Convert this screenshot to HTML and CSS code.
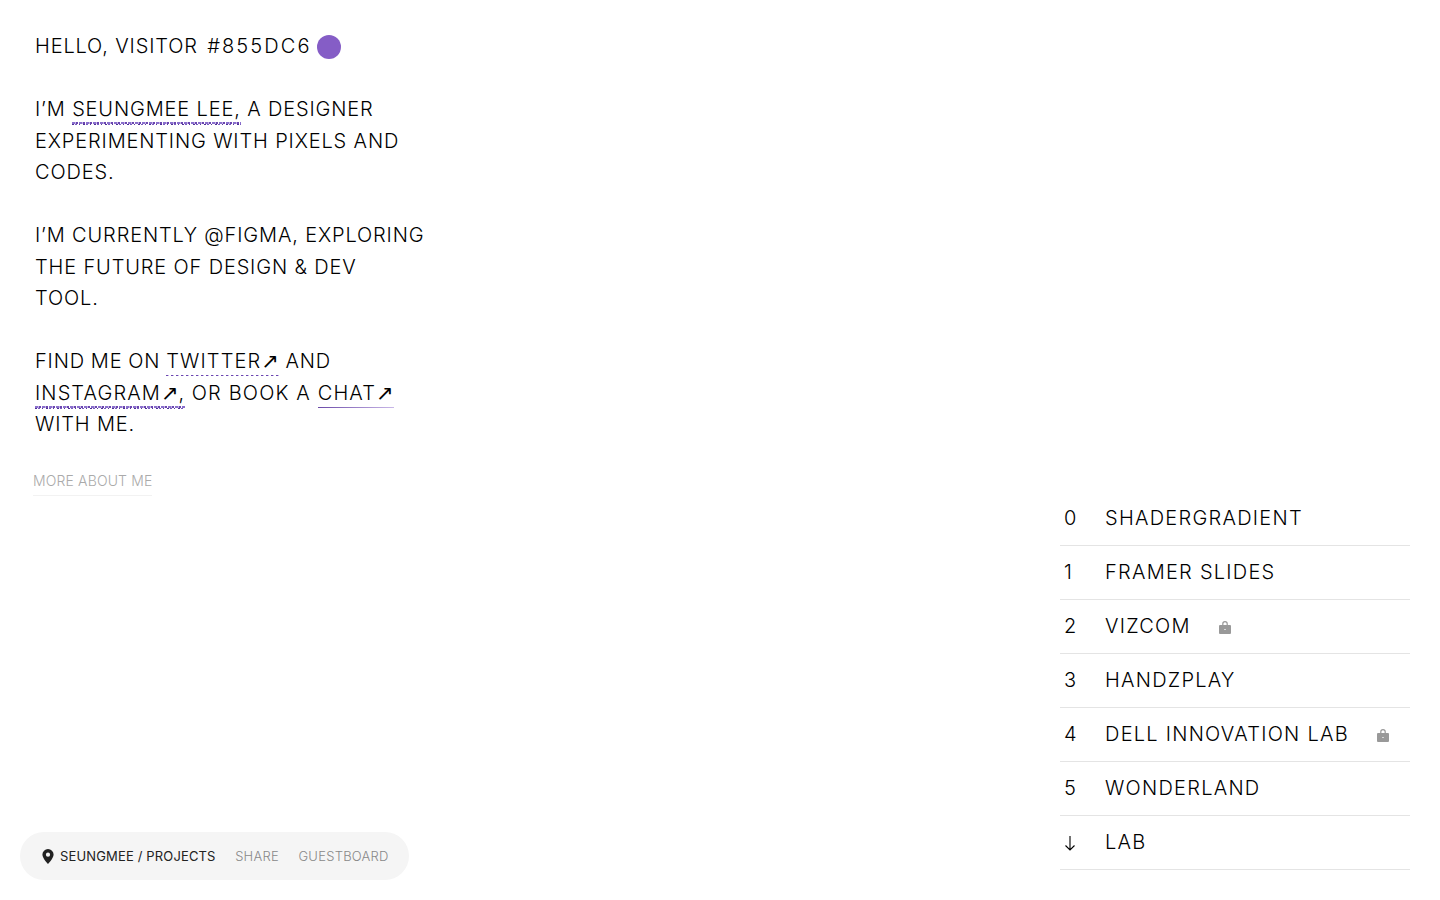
FILE: index.html
```html
<!DOCTYPE html>
<html lang="en">
<head>
<meta charset="utf-8">
<title>Seungmee Lee</title>
<link rel="stylesheet" href="styles.css">
</head>
<body>
<main class="page">
  <section class="intro">
    <p class="para">HELLO, VISITOR <span class="code">#855DC6</span> <span class="dot"></span></p>
    <p class="para">I’M <a class="link squiggle">SEUNGMEE LEE,</a> A DESIGNER EXPERIMENTING WITH PIXELS AND CODES.</p>
    <p class="para">I’M CURRENTLY @FIGMA, EXPLORING THE FUTURE OF DESIGN &amp; DEV TOOL.</p>
    <p class="para"><span class="tight">FIND ME ON </span><a class="link faint">TWITTER<span class="arrow">↗</span></a> AND <a class="link squiggle wide">INSTAGRAM<span class="arrow">↗</span>,</a> <span class="loose">OR BOOK A </span><a class="link soft">CHAT<span class="arrow">↗</span></a> WITH ME.</p>
    <a class="more">MORE ABOUT ME</a>
  </section>
  <ol class="projects">
    <li class="project"><span class="num">0</span><span class="name">SHADERGRADIENT</span></li>
    <li class="project"><span class="num">1</span><span class="name">FRAMER SLIDES</span></li>
    <li class="project"><span class="num">2</span><span class="name">VIZCOM</span><svg class="lock" viewBox="0 0 12 14"><path d="M3.200 6V3.800a2.800 2.800 0 0 1 5.600 0V6H7.600V3.800a1.600 1.600 0 0 0-3.200 0V6z"/><path fill-rule="evenodd" d="M1 5h10a1 1 0 0 1 1 1v7a1 1 0 0 1-1 1H1a1 1 0 0 1-1-1V6a1 1 0 0 1 1-1zm4.400 4v1h1.200V9z"/></svg></li>
    <li class="project"><span class="num">3</span><span class="name">HANDZPLAY</span></li>
    <li class="project"><span class="num">4</span><span class="name">DELL INNOVATION LAB</span><svg class="lock" viewBox="0 0 12 14"><path d="M3.200 6V3.800a2.800 2.800 0 0 1 5.600 0V6H7.600V3.800a1.600 1.600 0 0 0-3.200 0V6z"/><path fill-rule="evenodd" d="M1 5h10a1 1 0 0 1 1 1v7a1 1 0 0 1-1 1H1a1 1 0 0 1-1-1V6a1 1 0 0 1 1-1zm4.400 4v1h1.200V9z"/></svg></li>
    <li class="project"><span class="num">5</span><span class="name">WONDERLAND</span></li>
    <li class="project"><span class="num"><svg class="down" viewBox="0 0 12 16"><path d="M6 1v14M1.500 10.500 6 15l4.500-4.500"/></svg></span><span class="name">LAB</span></li>
  </ol>
</main>
<nav class="dock">
  <svg class="pin" viewBox="0 0 12 15"><path fill-rule="evenodd" d="M6 0a5.600 5.600 0 0 1 5.600 5.600C11.600 9.400 6 15 6 15S.4 9.400.4 5.600A5.600 5.600 0 0 1 6 0zm0 3.600a2.100 2.100 0 1 0 0 4.200 2.100 2.100 0 0 0 0-4.200z"/></svg>
  <span class="crumb">SEUNGMEE / PROJECTS</span>
  <a class="dock-link">SHARE</a>
  <a class="dock-link">GUESTBOARD</a>
</nav>
</body>
</html>
```

FILE: styles.css
```css
* { box-sizing: border-box; }
html, body { margin: 0; padding: 0; height: 100%; background: #fff; overflow: hidden; }
body { font-family: Inter, "Liberation Sans", sans-serif; color: #000; }

.page {
  height: 900px;
  display: flex;
  justify-content: space-between;
  align-items: flex-end;
  padding: 31px 30px 30px 35px;
}

.intro {
  align-self: flex-start;
  width: 390px;
  font-size: 20px;
  font-weight: 300;
  letter-spacing: .85px;
  line-height: 31.5px;
}
.para { margin: 0 0 31.5px; }
.tight { word-spacing: -.6px; }
.loose { letter-spacing: 1.15px; }

.code { margin-left: 3px; letter-spacing: 2.1px; }

.dot {
  display: inline-block;
  width: 24px;
  height: 24px;
  margin-left: -1px;
  border-radius: 50%;
  background: #855dc6;
  vertical-align: -6px;
}

.arrow {
  font-family: "DejaVu Sans", sans-serif;
  font-weight: 400;
  font-size: 21px;
  letter-spacing: 0;
}

.link {
  padding-bottom: 4px;
  letter-spacing: 1.1px;
  background-repeat: no-repeat;
  background-position: left bottom;
}
.squiggle {
  letter-spacing: .85px;
  background-image:
    repeating-linear-gradient(90deg, #4f2f96 0 2px, transparent 2px 3px, #7a5cc0 3px 5px, transparent 5px 7px, #5b3a9c 7px 8px, transparent 8px 11px),
    repeating-linear-gradient(90deg, #8a6fcc 0 3px, #c4b5e4 3px 4px, #6a45b0 4px 6px, transparent 6px 7px);
  background-size: 100% 1px, 100% 2px;
  background-position: left bottom, left calc(100% - 1px);
}
.wide { letter-spacing: 1.1px; }
.faint {
  background-image: repeating-linear-gradient(90deg, #6a45b0 0 2px, #c5b5e6 2px 3px, transparent 3px 5px);
  background-size: 100% 1px;
  background-position: left calc(100% - 1px);
}
.soft {
  background-image: linear-gradient(90deg, #6b4aa8, #c9b8e8);
  background-size: 100% 1px;
  background-position: left calc(100% - 1px);
}

.more {
  display: block;
  width: fit-content;
  margin: -1.5px 0 0 -2px;
  padding: 0 0 4px 0;
  font-size: 14px;
  font-weight: 300;
  letter-spacing: .14px;
  line-height: 20px;
  color: #aaa;
  border-bottom: 1px solid #f2f2f2;
}

.projects {
  width: 350px;
  margin: 0;
  padding: 0;
  list-style: none;
}
.project {
  display: flex;
  align-items: center;
  height: 54px;
  padding-bottom: 2px;
  border-bottom: 1px solid #e4e4e4;
  font-size: 20px;
  font-weight: 300;
  letter-spacing: 1.25px;
}
.num { width: 45px; padding-left: 4px; display: flex; }
.name { white-space: nowrap; }
.lock { width: 12px; height: 14px; margin-left: 28.5px; margin-top: 3px; fill: #999; }
.down { width: 12px; height: 16px; fill: none; stroke: #000; stroke-width: 1.1; margin-top: 3px; }

.dock {
  position: fixed;
  left: 20px;
  bottom: 20px;
  display: flex;
  align-items: center;
  height: 48px;
  padding: 0 20px 0 22px;
  border-radius: 24px;
  background: #f5f5f5;
  font-size: 13px;
  letter-spacing: .15px;
  white-space: nowrap;
}
.pin { width: 12px; height: 15px; margin-right: 6px; fill: #222; }
.crumb { color: #222; font-weight: 400; }
.dock-link { margin-left: 19.5px; color: #888; font-weight: 300; letter-spacing: .25px; }
```
